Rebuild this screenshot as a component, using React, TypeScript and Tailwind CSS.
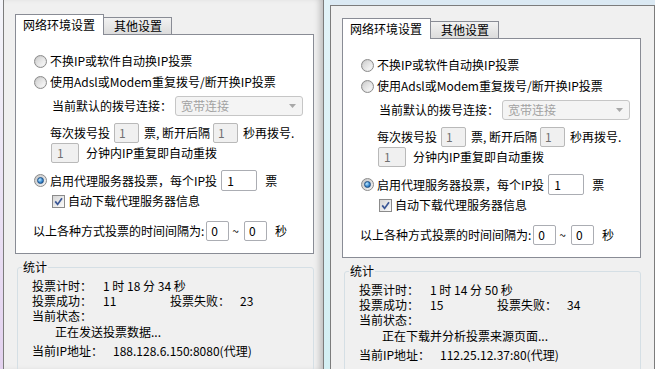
import React from 'react';

type Stats = {
  time: string;
  ok: string;
  fail: string;
  status: string;
  ip: string;
};

const Radio = ({ checked }: { checked?: boolean }) => (
  <span className="flex h-[13px] w-[13px] shrink-0 items-center justify-center rounded-full border border-[#8b8b8b] bg-[linear-gradient(135deg,#c4c4c4,#f5f5f5)]">
    {checked ? (
      <span className="h-[7px] w-[7px] rounded-full border border-[#1d4e84] bg-[radial-gradient(circle_at_35%_35%,#bfeaff,#3c8cd2_55%,#134d8b)]" />
    ) : (
      <span className="h-[9px] w-[9px] rounded-full bg-[linear-gradient(135deg,#d0d0d0,#fbfbfb)]" />
    )}
  </span>
);

const Check = () => (
  <span className="flex h-[13px] w-[13px] shrink-0 items-center justify-center border border-[#8b8b8b] bg-[linear-gradient(135deg,#d6d6d6,#fbfbfb)]">
    <svg width="9" height="9" viewBox="0 0 9 9">
      <path d="M1.2 4.4 L3.6 7.4 L8 1.2" fill="none" stroke="#3b5796" strokeWidth="1.7" />
    </svg>
  </span>
);

const Window = ({ className, stats }: { className: string; stats: Stats }) => (
  <div className={`shrink-0 bg-[#f0f0f0] ${className}`}>
    {/* Tabs */}
    <div className="ml-[11px] flex h-[20px] items-end">
      <div className="relative z-10 -mb-px flex h-[21px] w-[89px] items-center border border-b-0 border-[#898c95] bg-white pl-[7px]">
        网络环境设置
      </div>
      <div className="flex h-[17px] w-[68px] items-center border-t border-r border-[#898c95] bg-[linear-gradient(#f2f2f2,#dcdcdc)] pl-[10px]">
        其他设置
      </div>
    </div>

    {/* Panel */}
    <div className="ml-[11px] h-[220px] w-[299px] border border-[#898c95] bg-white pl-[18px] pt-[16px]">
      <div className="flex h-[20px] items-center gap-[3px]">
        <Radio />
        <span>不换IP或软件自动换IP投票</span>
      </div>
      <div className="mt-px flex h-[20px] items-center gap-[3px]">
        <Radio />
        <span>使用Adsl或Modem重复拨号/断开换IP投票</span>
      </div>
      <div className="mt-[4px] flex h-[20px] items-center pl-[18px]">
        <span className="w-[123px]">当前默认的拨号连接：</span>
        <div className="flex h-[20px] w-[128px] items-center justify-between rounded-[3px] border border-[#c6c6c6] bg-[#f4f4f4] pl-[5px] pr-[6px] text-[#a2a2a2]">
          <span>宽带连接</span>
          <svg width="7" height="4" viewBox="0 0 7 4">
            <path d="M0 0 H7 L3.5 4 Z" fill="#a8a8a8" />
          </svg>
        </div>
      </div>
      <div className="mt-[7px] flex h-[20px] items-center pl-[16px]">
        <span>每次拨号投</span>
        <span className="ml-[4px] flex h-[20px] w-[25px] items-center rounded-[2px] border border-[#b9b9b9] bg-[#f0f0f0] pl-[4px] text-[#707070]">1</span>
        <span className="ml-[5px]">票, 断开后隔</span>
        <span className="ml-[3px] flex h-[20px] w-[25px] items-center rounded-[2px] border border-[#b9b9b9] bg-[#f0f0f0] pl-[4px] text-[#707070]">1</span>
        <span className="ml-[5px]">秒再拨号.</span>
      </div>
      <div className="flex h-[20px] items-center pl-[17px]">
        <span className="flex h-[20px] w-[28px] items-center rounded-[2px] border border-[#b9b9b9] bg-[#f0f0f0] pl-[5px] text-[#707070]">1</span>
        <span className="ml-[7px]">分钟内IP重复即自动重拨</span>
      </div>
      <div className="mt-[7px] flex h-[21px] items-center">
        <Radio checked />
        <span className="ml-[3px]">启用代理服务器投票，每个IP投</span>
        <span className="ml-[4px] flex h-[21px] w-[36px] items-center rounded-[2px] border border-[#abadb3] bg-white pl-[5px]">1</span>
        <span className="ml-[8px]">票</span>
      </div>
      <div className="mt-[2px] flex h-[16px] items-center pl-[18px]">
        <Check />
        <span className="ml-[3px]">自动下载代理服务器信息</span>
      </div>
      <div className="-ml-px mt-[12px] flex h-[20px] items-center">
        <span>以上各种方式投票的时间间隔为:</span>
        <span className="ml-[2px] flex h-[20px] w-[23px] items-center rounded-[2px] border border-[#abadb3] bg-white pl-[4px]">0</span>
        <span className="ml-[3px] mr-[5px]">~</span>
        <span className="flex h-[20px] w-[23px] items-center rounded-[2px] border border-[#abadb3] bg-white pl-[4px]">0</span>
        <span className="ml-[8px]">秒</span>
      </div>
    </div>

    {/* Stats */}
    <fieldset className="ml-[13px] mt-[6px] h-[120px] w-[297px] rounded-[3px] border border-[#d5dfe5]">
      <legend className="ml-[4px] px-px">统计</legend>
      <div className="pl-[14px] pt-[4px]">
        <div className="flex h-[15px] items-center">
          <span className="w-[71px]">投票计时：</span>
          <span>1 时 {stats.time}</span>
        </div>
        <div className="flex h-[15px] items-center">
          <span className="w-[71px]">投票成功：</span>
          <span className="w-[67px]">{stats.ok}</span>
          <span className="w-[70px]">投票失败：</span>
          <span>{stats.fail}</span>
        </div>
        <div className="flex h-[15px] items-center">当前状态：</div>
        <div className="mt-px flex h-[15px] items-center pl-[23px]">{stats.status}</div>
        <div className="mt-[4px] flex h-[15px] items-center">
          <span className="w-[81px]">当前IP地址：</span>
          <span>{stats.ip}</span>
        </div>
      </div>
    </fieldset>
  </div>
);

const App = () => (
  <div className="flex h-[369px] w-[655px] overflow-hidden bg-[#dbe9f3] font-['Noto_Sans_CJK_SC','Liberation_Sans',sans-serif] text-[12px] leading-[14px] text-black">
    <div className="w-[3px] shrink-0 bg-[linear-gradient(#f4f5fa,#e3d2ef)]" />
    <Window
      className="w-[321px] border-x border-[#7c7c7c] pt-[14px] shadow-[inset_-6px_0_6px_-3px_rgba(0,0,0,0.22)]"
      stats={{
        time: '18 分 34 秒',
        ok: '11',
        fail: '23',
        status: '正在发送投票数据...',
        ip: '188.128.6.150:8080(代理)',
      }}
    />
    <div className="w-[6px] shrink-0 bg-[linear-gradient(#e2f3f8,#d3eff3)]" />
    <Window
      className="mt-[5px] w-[325px] border-x border-t border-[#7c7c7c] pt-[12px]"
      stats={{
        time: '14 分 50 秒',
        ok: '15',
        fail: '34',
        status: '正在下载并分析投票来源页面...',
        ip: '112.25.12.37:80(代理)',
      }}
    />
  </div>
);

export default App;
